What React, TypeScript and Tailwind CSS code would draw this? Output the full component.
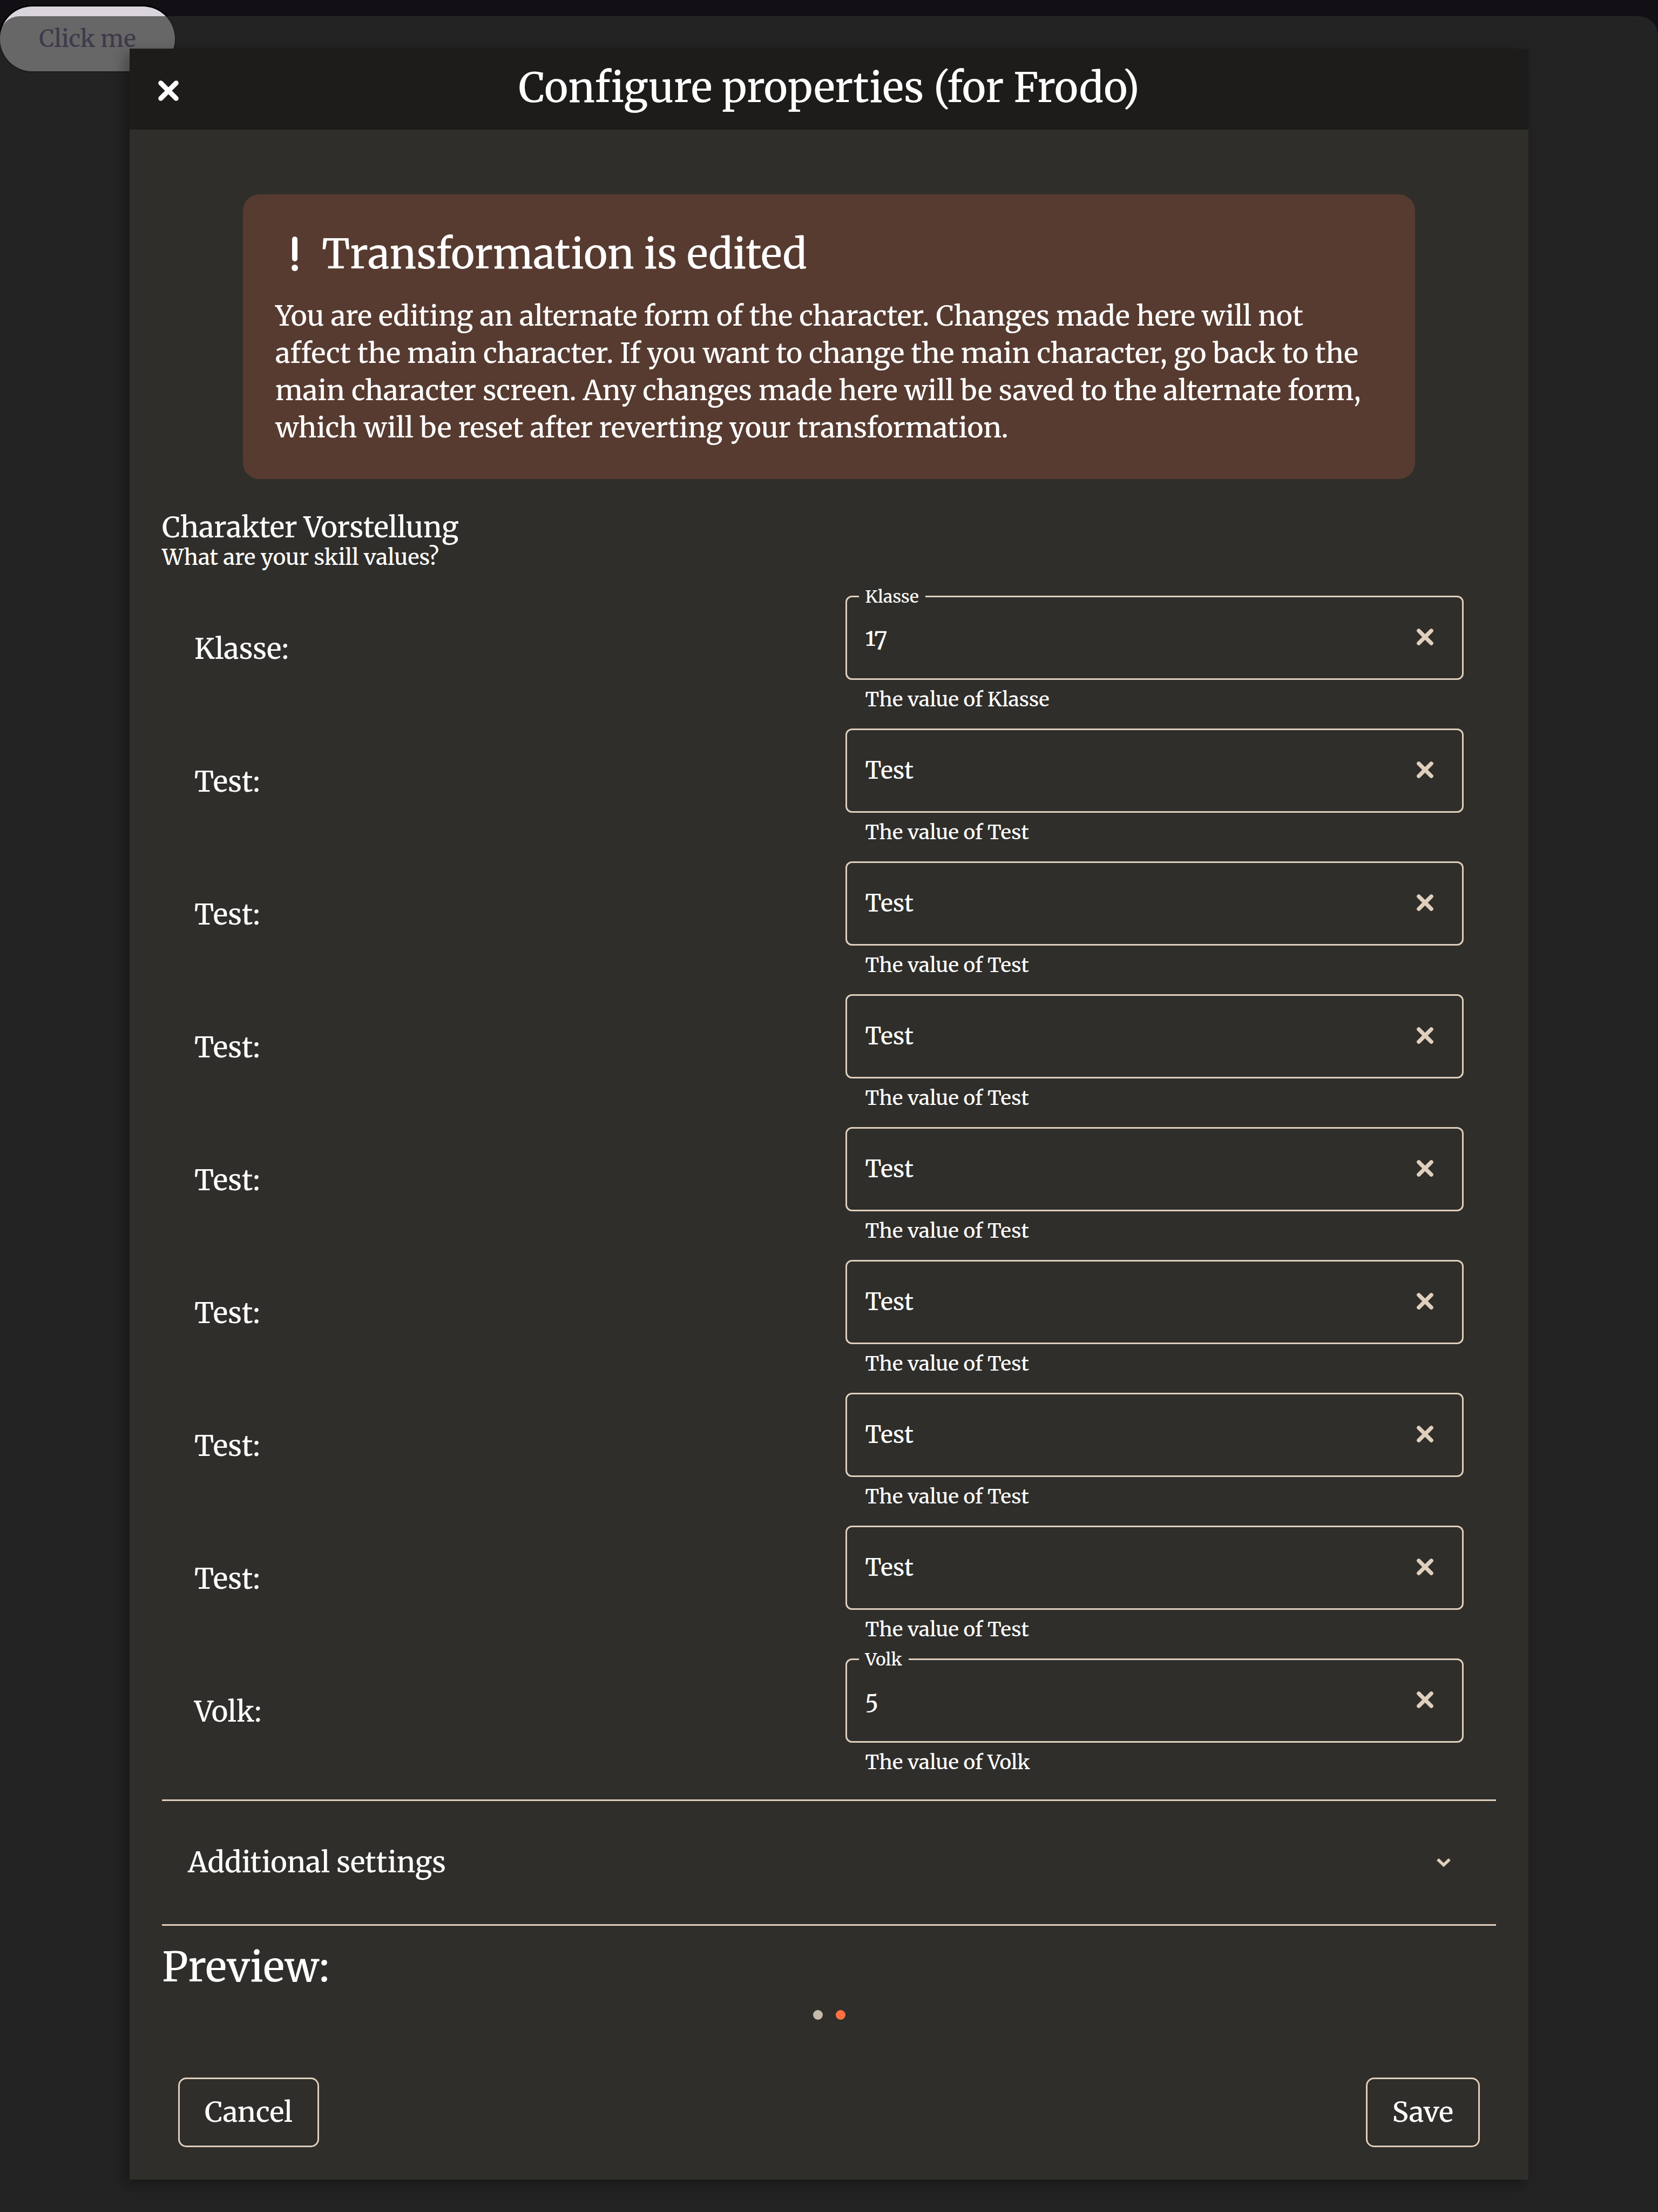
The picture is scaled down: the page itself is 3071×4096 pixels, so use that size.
import { useState } from "react";

type Property = { id: string; name: string; value: string };

const properties: Property[] = [
  { id: "klasse", name: "Klasse", value: "17" },
  { id: "test-1", name: "Test", value: "" },
  { id: "test-2", name: "Test", value: "" },
  { id: "test-3", name: "Test", value: "" },
  { id: "test-4", name: "Test", value: "" },
  { id: "test-5", name: "Test", value: "" },
  { id: "test-6", name: "Test", value: "" },
  { id: "test-7", name: "Test", value: "" },
  { id: "volk", name: "Volk", value: "5" },
];

function CrossIcon({ className }: { className: string }) {
  return (
    <svg viewBox="0 0 32 32" className={className} fill="none" stroke="currentColor" strokeWidth="7.6" strokeLinecap="round" aria-hidden="true">
      <path d="M4 4 28 28M28 4 4 28" />
    </svg>
  );
}

function ExclamationIcon() {
  return (
    <svg viewBox="0 0 72 72" className="size-[72px]" fill="currentColor" aria-hidden="true">
      <rect x="31" y="4" width="10" height="46" rx="5" />
      <circle cx="36" cy="62" r="6" />
    </svg>
  );
}

function PropertyRow({ id, name, value: initial }: Property) {
  const [value, setValue] = useState(initial);
  return (
    <div className="grid grid-cols-2 gap-[60px]">
      <span className="py-[66px] text-[52px] leading-[66px]">{name}:</span>
      <div>
        <div className="relative flex h-[156px] items-center rounded-[12px] border-3 border-[#dfcfbc]">
          {value !== "" && (
            <label htmlFor={id} className="absolute -top-[22px] left-[22px] bg-[#2f2e2a] px-3 text-[32px] leading-[42px]">
              {name}
            </label>
          )}
          <input
            id={id}
            aria-label={name}
            aria-describedby={`${id}-hint`}
            placeholder={name}
            value={value}
            onChange={(e) => setValue(e.target.value)}
            className="h-full min-w-0 flex-1 bg-transparent pl-[34px] text-[43px] text-white oldstyle-nums outline-none placeholder:text-white"
          />
          <button type="button" aria-label={`Clear ${name}`} onClick={() => setValue("")} className="flex h-full w-[138px] items-center justify-center pb-1 text-[#dfcfbc]">
            <CrossIcon className="size-[31px]" />
          </button>
        </div>
        <p id={`${id}-hint`} className="pt-3 pl-[37px] text-[37px] leading-[48px]">
          The value of {name}
        </p>
      </div>
    </div>
  );
}

export default function App() {
  const [open, setOpen] = useState(false);
  const outlined = "h-[129px] rounded-[15px] border-3 border-[#dfcfbc] px-[46px] text-[51px]";
  return (
    <div className="grid min-h-screen overflow-hidden bg-[#131015] font-['Merriweather','DejaVu_Serif',serif] font-medium text-white">
      <button type="button" className="mt-3 h-[120px] w-[324px] self-start rounded-full bg-[#dad5dc] text-[43px] text-[#5f5385] shadow-[0_0_0_3px_black] [grid-area:1/1]">
        Click me
      </button>

      <div className="z-10 mt-[30px] rounded-t-[36px] bg-[#2d2d2c]/66 px-[240px] py-[60px] [grid-area:1/1]">
        <section role="dialog" aria-labelledby="dialog-title" className="bg-[#2f2e2a] shadow-[-9px_9px_24px_rgba(0,0,0,0.33)]">
          <header className="grid h-[150px] grid-cols-[144px_1fr_144px] bg-[#1d1c1a]">
            <button type="button" aria-label="Close" className="flex items-center justify-center pt-1.5">
              <CrossIcon className="size-[38px]" />
            </button>
            <h1 id="dialog-title" className="self-center pb-1.5 text-center text-[75px] leading-[100px] font-medium">
              Configure properties (for Frodo)
            </h1>
          </header>

          <div className="px-[60px] pt-[120px] pb-[60px]">
            <div role="alert" className="mx-[150px] rounded-[30px] bg-[#573b30] px-[60px] pt-[60px] pb-[60px]">
              <h2 className="flex items-center gap-3.5 text-[75px] leading-[100px] font-medium">
                <ExclamationIcon />
                Transformation is edited
              </h2>
              <p className="mt-[31px] pr-9 text-[51px] leading-[69px]">
                You are editing an alternate form of the character. Changes made here will not affect the main character. If you want to
                change the main character, go back to the main character screen. Any changes made here will be saved to the alternate
                form, which will be reset after reverting your transformation.
              </p>
            </div>

            <h3 className="mt-[60px] text-[52px] leading-[60px] font-medium">Charakter Vorstellung</h3>
            <p className="text-[40px] leading-[50px]">What are your skill values?</p>

            <div className="mt-[46px] flex flex-col gap-[30px] px-[60px]">
              {properties.map((p) => (
                <PropertyRow key={p.id} {...p} />
              ))}
            </div>

            <button
              type="button"
              aria-expanded={open}
              onClick={() => setOpen(!open)}
              className="mt-[45px] flex h-[234px] w-full items-center justify-between border-y-3 border-[#dfcfbc] pr-[84px] pl-12 text-left text-[52px]"
            >
              Additional settings
              <svg viewBox="0 0 26 18" className="h-[18px] w-[26px]" fill="none" stroke="#dfcfbc" strokeWidth="5.6" aria-hidden="true">
                <path d="M2 3 13 13.5 24 3" />
              </svg>
            </button>

            <h2 className="mt-[26px] text-[75px] leading-[100px] font-medium">Preview:</h2>
            <div className="mt-[30px] flex justify-center gap-6">
              <span className="size-[18px] rounded-full bg-[#c6baaa]" />
              <span className="size-[18px] rounded-full bg-[#ff7043]" />
            </div>

            <footer className="mt-[107px] flex justify-between px-[30px]">
              <button type="button" className={outlined}>
                Cancel
              </button>
              <button type="button" className={outlined}>
                Save
              </button>
            </footer>
          </div>
        </section>
      </div>
    </div>
  );
}
